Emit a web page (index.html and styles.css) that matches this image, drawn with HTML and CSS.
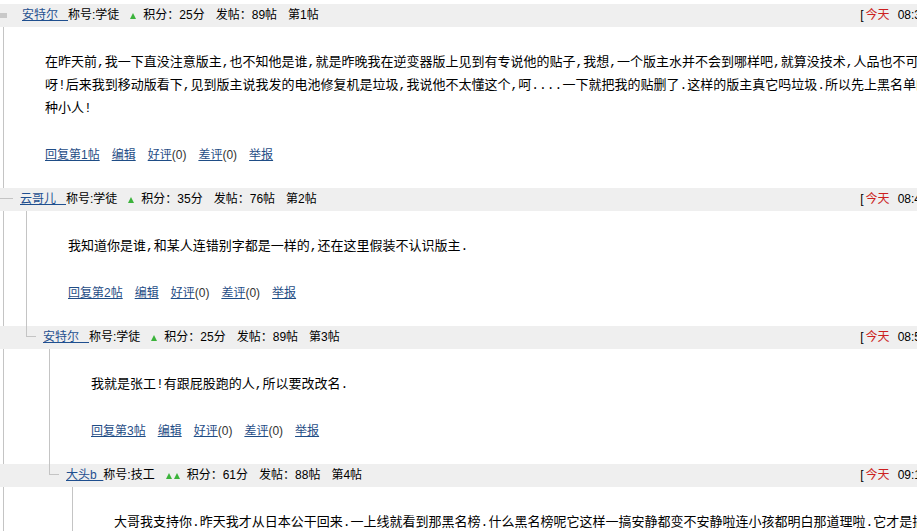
FILE: index.html
```html
<!DOCTYPE html>
<html lang="zh-CN">
<head>
    <meta charset="UTF-8">
    <title>帖子回复</title>
    <link rel="stylesheet" href="styles.css">
</head>
<body>
    <div class="thread">
        <div class="post lv0">
            <div class="post-head">
                <span class="tree-mark"></span>
                <a class="name" href="#">安特尔&nbsp;&nbsp;&nbsp;</a>
                <span class="title">称号:学徒</span>
                <span class="rank"><i class="star"></i></span>
                <span class="info">积分：25分</span>
                <span class="info">发帖：89帖</span>
                <span class="info">第1帖</span>
                <span class="post-time">[<em>今天</em>08:35]</span>
            </div>
            <div class="post-body">
                <p class="post-text">在昨天前,我一下直没注意版主,也不知他是谁,就是昨晚我在逆变器版上见到有专说他的贴子,我想,一个版主水并不会到哪样吧,就算没技术,人品也不可能是这样<br>呀!后来我到移动版看下,见到版主说我发的电池修复机是垃圾,我说他不太懂这个,呵....一下就把我的贴删了.这样的版主真它吗垃圾.所以先上黑名单的就是这<br>种小人!</p>
                <div class="post-ops">
                    <a href="#">回复第1帖</a>
                    <a href="#">编辑</a>
                    <span><a href="#">好评</a>(0)</span>
                    <span><a href="#">差评</a>(0)</span>
                    <a href="#">举报</a>
                </div>
            </div>
        </div>

        <div class="post lv1">
            <div class="post-head">
                <span class="tree-mark"></span>
                <a class="name" href="#">云哥儿&nbsp;&nbsp;&nbsp;</a>
                <span class="title">称号:学徒</span>
                <span class="rank"><i class="star"></i></span>
                <span class="info">积分：35分</span>
                <span class="info">发帖：76帖</span>
                <span class="info">第2帖</span>
                <span class="post-time">[<em>今天</em>08:41]</span>
            </div>
            <div class="post-body">
                <p class="post-text">我知道你是谁,和某人连错别字都是一样的,还在这里假装不认识版主.</p>
                <div class="post-ops">
                    <a href="#">回复第2帖</a>
                    <a href="#">编辑</a>
                    <span><a href="#">好评</a>(0)</span>
                    <span><a href="#">差评</a>(0)</span>
                    <a href="#">举报</a>
                </div>
            </div>
        </div>

        <div class="post lv2">
            <div class="post-head">
                <span class="tree-mark"></span>
                <a class="name" href="#">安特尔&nbsp;&nbsp;&nbsp;</a>
                <span class="title">称号:学徒</span>
                <span class="rank"><i class="star"></i></span>
                <span class="info">积分：25分</span>
                <span class="info">发帖：89帖</span>
                <span class="info">第3帖</span>
                <span class="post-time">[<em>今天</em>08:52]</span>
            </div>
            <div class="post-body">
                <p class="post-text">我就是张工!有跟屁股跑的人,所以要改改名.</p>
                <div class="post-ops">
                    <a href="#">回复第3帖</a>
                    <a href="#">编辑</a>
                    <span><a href="#">好评</a>(0)</span>
                    <span><a href="#">差评</a>(0)</span>
                    <a href="#">举报</a>
                </div>
            </div>
        </div>

        <div class="post lv3">
            <div class="post-head">
                <span class="tree-mark"></span>
                <a class="name" href="#">大头b&nbsp;&nbsp;</a>
                <span class="title">称号:技工</span>
                <span class="rank"><i class="star"></i><i class="star"></i></span>
                <span class="info">积分：61分</span>
                <span class="info">发帖：88帖</span>
                <span class="info">第4帖</span>
                <span class="post-time">[<em>今天</em>09:10]</span>
            </div>
            <div class="post-body">
                <p class="post-text">大哥我支持你.昨天我才从日本公干回来.一上线就看到那黑名榜.什么黑名榜呢它这样一搞安静都变不安静啦连小孩都明白那道理啦.它才是搞屁</p>
                <div class="post-ops">
                    <a href="#">回复第4帖</a>
                    <a href="#">编辑</a>
                    <span><a href="#">好评</a>(0)</span>
                    <span><a href="#">差评</a>(0)</span>
                    <a href="#">举报</a>
                </div>
            </div>
        </div>
    </div>
</body>
</html>
```

FILE: styles.css
```css
body { margin: 0; overflow: hidden; background: #fff; color: #000; font: 12px "Liberation Sans", "Noto Sans CJK SC", sans-serif; }
a { color: #1f4d86; text-decoration: underline; }

.thread { width: 940px; padding-top: 4px; }

.post { --lv: 0; }
.post.lv1 { --lv: 1; }
.post.lv2 { --lv: 2; }
.post.lv3 { --lv: 3; }

/* header bar: full width, text indented by depth */
.post-head { display: flex; align-items: center; height: 23px; line-height: 23px; background: #efefef; padding-left: calc(3px + 23px * (var(--lv) - 1)); padding-right: 9px; white-space: nowrap; }
.tree-mark { align-self: flex-start; width: 10px; height: 11px; border-left: 1px solid #c4c4c4; border-bottom: 1px solid #c4c4c4; margin-right: 7px; box-sizing: border-box; }
.lv0 .post-head { padding-left: 0; }
.lv0 .tree-mark { align-self: center; width: 7px; height: 5px; border: 0; background: #c8c8c8; margin-right: 15px; }
.lv1 .post-head { padding-left: 0; }
.lv1 .tree-mark { width: 13px; border-left: 0; }

.name { color: #1f4f8f; }
.rank { display: flex; gap: 2px; margin: 0 7px 0 11px; }
.star { display: block; width: 0; height: 0; border-left: 3px solid transparent; border-right: 3px solid transparent; border-bottom: 6px solid #3bb33b; }
.info + .info { margin-left: 11px; }

.post-time { margin-left: auto; }
.post-time em { font-style: normal; color: #cc1f1f; margin: 0 8px 0 2px; }

/* body: tree lines drawn as 1px backgrounds */
.post-body { padding: 24px 0 21px calc(45px + 23px * var(--lv)); background-image: linear-gradient(#c4c4c4, #c4c4c4), linear-gradient(#c4c4c4, #c4c4c4); background-size: 1px 100%, 1px 100%; background-position: 3px 0, calc(3px + 23px * var(--lv)) 0; background-repeat: no-repeat; }
.post-text { margin: 0 0 24px; font-size: 13px; line-height: 23px; font-family: "Liberation Mono", "Noto Sans CJK SC", monospace; white-space: nowrap; }
.post-ops { display: flex; gap: 12px; height: 23px; line-height: 23px; color: #333; }
.post-ops a { color: #1f4d86; }
```
